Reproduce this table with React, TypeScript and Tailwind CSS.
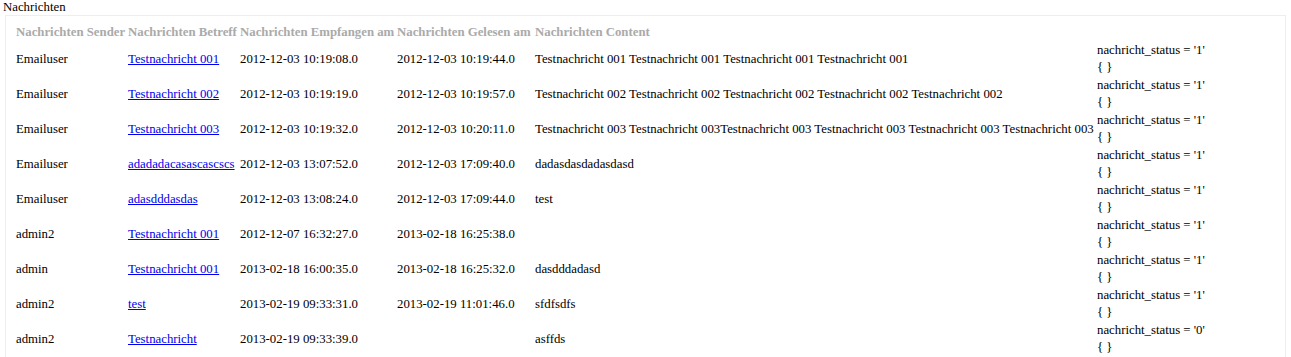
import React from "react"

type Nachricht = {
  sender: string
  betreff: string
  empfangen: string
  gelesen: string
  content: string
  status: string
}

const nachrichten: Nachricht[] = [
  {
    sender: "Emailuser",
    betreff: "Testnachricht 001",
    empfangen: "2012-12-03 10:19:08.0",
    gelesen: "2012-12-03 10:19:44.0",
    content: "Testnachricht 001 Testnachricht 001 Testnachricht 001 Testnachricht 001",
    status: "1",
  },
  {
    sender: "Emailuser",
    betreff: "Testnachricht 002",
    empfangen: "2012-12-03 10:19:19.0",
    gelesen: "2012-12-03 10:19:57.0",
    content:
      "Testnachricht 002 Testnachricht 002 Testnachricht 002 Testnachricht 002 Testnachricht 002",
    status: "1",
  },
  {
    sender: "Emailuser",
    betreff: "Testnachricht 003",
    empfangen: "2012-12-03 10:19:32.0",
    gelesen: "2012-12-03 10:20:11.0",
    content:
      "Testnachricht 003 Testnachricht 003Testnachricht 003 Testnachricht 003 Testnachricht 003 Testnachricht 003",
    status: "1",
  },
  {
    sender: "Emailuser",
    betreff: "adadadacasascascscs",
    empfangen: "2012-12-03 13:07:52.0",
    gelesen: "2012-12-03 17:09:40.0",
    content: "dadasdasdadasdasd",
    status: "1",
  },
  {
    sender: "Emailuser",
    betreff: "adasdddasdas",
    empfangen: "2012-12-03 13:08:24.0",
    gelesen: "2012-12-03 17:09:44.0",
    content: "test",
    status: "1",
  },
  {
    sender: "admin2",
    betreff: "Testnachricht 001",
    empfangen: "2012-12-07 16:32:27.0",
    gelesen: "2013-02-18 16:25:38.0",
    content: "",
    status: "1",
  },
  {
    sender: "admin",
    betreff: "Testnachricht 001",
    empfangen: "2013-02-18 16:00:35.0",
    gelesen: "2013-02-18 16:25:32.0",
    content: "dasdddadasd",
    status: "1",
  },
  {
    sender: "admin2",
    betreff: "test",
    empfangen: "2013-02-19 09:33:31.0",
    gelesen: "2013-02-19 11:01:46.0",
    content: "sfdfsdfs",
    status: "1",
  },
  {
    sender: "admin2",
    betreff: "Testnachricht",
    empfangen: "2013-02-19 09:33:39.0",
    gelesen: "",
    content: "asffds",
    status: "0",
  },
]

export default function App() {
  return (
    <div className="[font-family:'Liberation_Serif',serif] text-[12.8px] text-black bg-white min-h-screen">
      {/* Titel */}
      <div className="pl-[3px] leading-[15px]">Nachrichten</div>

      {/* Tabelle */}
      <div className="mx-[5px] border border-[#eeeeee] pl-[10px] pr-[9px] pt-[7px] pb-[10px]">
        <table className="w-full table-fixed border-collapse">
          <colgroup>
            <col className="w-[112px]" />
            <col className="w-[112px]" />
            <col className="w-[157px]" />
            <col className="w-[138px]" />
            <col className="w-[562px]" />
            <col />
          </colgroup>
          <thead>
            <tr className="h-[17px] text-left font-bold text-[#aaaaaa] whitespace-nowrap">
              <th className="p-0 font-bold">Nachrichten Sender</th>
              <th className="p-0 font-bold">Nachrichten Betreff</th>
              <th className="p-0 font-bold">Nachrichten Empfangen am</th>
              <th className="p-0 font-bold">Nachrichten Gelesen am</th>
              <th className="p-0 font-bold">Nachrichten Content</th>
              <th className="p-0"></th>
            </tr>
          </thead>
          <tbody>
            {nachrichten.map((n, i) => (
              <tr key={i} className="h-[35px] align-middle whitespace-nowrap">
                <td className="p-0">{n.sender}</td>
                <td className="p-0">
                  <a href="#" className="text-[#0000ee] underline">
                    {n.betreff}
                  </a>
                </td>
                <td className="p-0">{n.empfangen}</td>
                <td className="p-0">{n.gelesen}</td>
                <td className="p-0">{n.content}</td>
                <td className="p-0 leading-[17px]">
                  <div className="-mt-[2px]">nachricht_status = '{n.status}'</div>
                  <div>{"{ }"}</div>
                </td>
              </tr>
            ))}
          </tbody>
        </table>
      </div>
    </div>
  )
}
